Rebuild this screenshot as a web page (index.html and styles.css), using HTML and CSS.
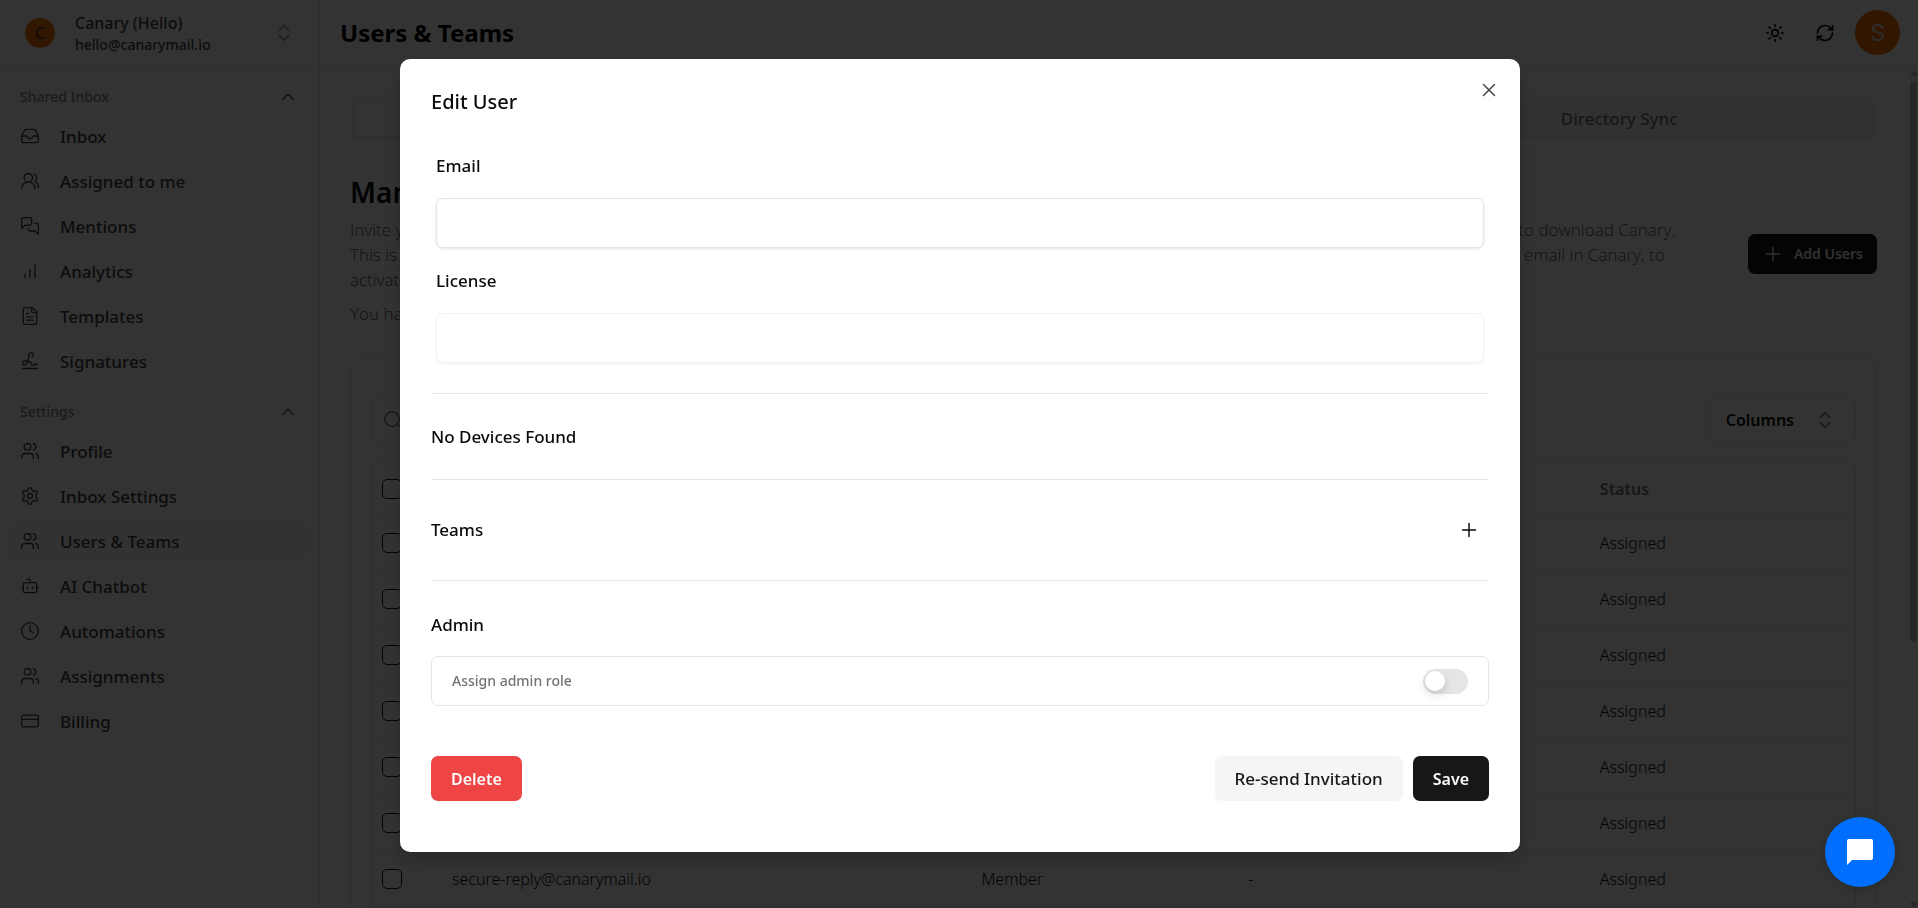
FILE: index.html
```html
<!DOCTYPE html>
<html lang="en">
<head>
    <meta charset="UTF-8">
    <meta name="viewport" content="width=device-width, initial-scale=1.0">
    <title>Users &amp; Teams</title>
    <link rel="stylesheet" href="styles.css">
</head>
<body>
    <!-- icon set -->
    <svg class="sprite" aria-hidden="true">
        <symbol id="i-inbox" viewBox="0 0 24 24"><path d="M22 12h-6l-2 3h-4l-2-3H2"/><path d="M5.45 5.11 2 12v6a2 2 0 0 0 2 2h16a2 2 0 0 0 2-2v-6l-3.45-6.89A2 2 0 0 0 16.76 4H7.24a2 2 0 0 0-1.79 1.11z"/></symbol>
        <symbol id="i-users-round" viewBox="0 0 24 24"><path d="M18 21a8 8 0 0 0-16 0"/><circle cx="10" cy="8" r="5"/><path d="M22 20c0-3.37-2-6.5-4-8a5 5 0 0 0-.45-8.3"/></symbol>
        <symbol id="i-messages" viewBox="0 0 24 24"><path d="M14 9a2 2 0 0 1-2 2H6l-4 4V4a2 2 0 0 1 2-2h8a2 2 0 0 1 2 2z"/><path d="M18 9h2a2 2 0 0 1 2 2v11l-4-4h-6a2 2 0 0 1-2-2v-1"/></symbol>
        <symbol id="i-bars" viewBox="0 0 24 24"><path d="M12 20V10M18 20V4M6 20v-4"/></symbol>
        <symbol id="i-file" viewBox="0 0 24 24"><path d="M15 2H6a2 2 0 0 0-2 2v16a2 2 0 0 0 2 2h12a2 2 0 0 0 2-2V7Z"/><path d="M14 2v4a2 2 0 0 0 2 2h4M10 9H8M16 13H8M16 17H8"/></symbol>
        <symbol id="i-signature" viewBox="0 0 24 24"><path d="m21 17-2.156-1.868A.5.5 0 0 0 18 15.5v.5a1 1 0 0 1-1 1h-2a1 1 0 0 1-1-1c0-2.545-3.991-3.97-8.5-4a1 1 0 0 0 0 5c4.153 0 4.745-11.295 5.708-13.5a2.5 2.5 0 1 1 3.31 3.284"/><path d="M3 21h18"/></symbol>
        <symbol id="i-users" viewBox="0 0 24 24"><path d="M16 21v-2a4 4 0 0 0-4-4H6a4 4 0 0 0-4 4v2"/><circle cx="9" cy="7" r="4"/><path d="M22 21v-2a4 4 0 0 0-3-3.87M16 3.13a4 4 0 0 1 0 7.75"/></symbol>
        <symbol id="i-gear" viewBox="0 0 24 24"><path d="M12.22 2h-.44a2 2 0 0 0-2 2v.18a2 2 0 0 1-1 1.73l-.43.25a2 2 0 0 1-2 0l-.15-.08a2 2 0 0 0-2.73.73l-.22.38a2 2 0 0 0 .73 2.73l.15.1a2 2 0 0 1 1 1.72v.51a2 2 0 0 1-1 1.74l-.15.09a2 2 0 0 0-.73 2.73l.22.38a2 2 0 0 0 2.73.73l.15-.08a2 2 0 0 1 2 0l.43.25a2 2 0 0 1 1 1.73V20a2 2 0 0 0 2 2h.44a2 2 0 0 0 2-2v-.18a2 2 0 0 1 1-1.73l.43-.25a2 2 0 0 1 2 0l.15.08a2 2 0 0 0 2.73-.73l.22-.39a2 2 0 0 0-.73-2.73l-.15-.08a2 2 0 0 1-1-1.74v-.5a2 2 0 0 1 1-1.74l.15-.09a2 2 0 0 0 .73-2.73l-.22-.38a2 2 0 0 0-2.73-.73l-.15.08a2 2 0 0 1-2 0l-.43-.25a2 2 0 0 1-1-1.73V4a2 2 0 0 0-2-2z"/><circle cx="12" cy="12" r="3"/></symbol>
        <symbol id="i-bot" viewBox="0 0 24 24"><path d="M12 8V4H8"/><rect width="16" height="12" x="4" y="8" rx="2"/><path d="M2 14h2M20 14h2M15 13v2M9 13v2"/></symbol>
        <symbol id="i-clock" viewBox="0 0 24 24"><circle cx="12" cy="12" r="10"/><path d="M12 6v6l4 2"/></symbol>
        <symbol id="i-card" viewBox="0 0 24 24"><rect width="20" height="14" x="2" y="5" rx="2"/><path d="M2 10h20"/></symbol>
        <symbol id="i-up" viewBox="0 0 24 24"><path d="m18 15-6-6-6 6"/></symbol>
        <symbol id="i-updown" viewBox="0 0 24 24"><path d="m7 15 5 5 5-5M7 9l5-5 5 5"/></symbol>
        <symbol id="i-sun" viewBox="0 0 24 24"><circle cx="12" cy="12" r="4"/><path d="M12 2v2M12 20v2M4.93 4.93l1.41 1.41M17.66 17.66l1.41 1.41M2 12h2M20 12h2M6.34 17.66l-1.41 1.41M19.07 4.93l-1.41 1.41"/></symbol>
        <symbol id="i-refresh" viewBox="0 0 24 24"><path d="M3 12a9 9 0 0 1 9-9 9.75 9.75 0 0 1 6.74 2.74L21 8"/><path d="M21 3v5h-5"/><path d="M21 12a9 9 0 0 1-9 9 9.75 9.75 0 0 1-6.74-2.74L3 16"/><path d="M8 16H3v5"/></symbol>
        <symbol id="i-search" viewBox="0 0 24 24"><circle cx="11" cy="11" r="8"/><path d="m21 21-4.3-4.3"/></symbol>
        <symbol id="i-plus" viewBox="0 0 24 24"><path d="M5 12h14M12 5v14"/></symbol>
        <symbol id="i-x" viewBox="0 0 24 24"><path d="M18 6 6 18M6 6l12 12"/></symbol>
    </svg>

    <div class="app">
        <aside class="sidebar">
            <button class="account" type="button">
                <span class="avatar avatar-sm">C</span>
                <span class="account-text">
                    <span class="account-name">Canary (Hello)</span>
                    <span class="account-mail">hello@canarymail.io</span>
                </span>
                <svg class="icon muted"><use href="#i-updown"/></svg>
            </button>
            <nav class="nav">
                <button class="nav-title" type="button">Shared Inbox <svg class="icon"><use href="#i-up"/></svg></button>
                <a class="nav-item" href="#"><svg class="icon"><use href="#i-inbox"/></svg>Inbox</a>
                <a class="nav-item" href="#"><svg class="icon"><use href="#i-users-round"/></svg>Assigned to me</a>
                <a class="nav-item" href="#"><svg class="icon"><use href="#i-messages"/></svg>Mentions</a>
                <a class="nav-item" href="#"><svg class="icon"><use href="#i-bars"/></svg>Analytics</a>
                <a class="nav-item" href="#"><svg class="icon"><use href="#i-file"/></svg>Templates</a>
                <a class="nav-item" href="#"><svg class="icon"><use href="#i-signature"/></svg>Signatures</a>
            </nav>
            <nav class="nav">
                <button class="nav-title" type="button">Settings <svg class="icon"><use href="#i-up"/></svg></button>
                <a class="nav-item" href="#"><svg class="icon"><use href="#i-users"/></svg>Profile</a>
                <a class="nav-item" href="#"><svg class="icon"><use href="#i-gear"/></svg>Inbox Settings</a>
                <a class="nav-item active" href="#"><svg class="icon"><use href="#i-users"/></svg>Users &amp; Teams</a>
                <a class="nav-item" href="#"><svg class="icon"><use href="#i-bot"/></svg>AI Chatbot</a>
                <a class="nav-item" href="#"><svg class="icon"><use href="#i-clock"/></svg>Automations</a>
                <a class="nav-item" href="#"><svg class="icon"><use href="#i-users"/></svg>Assignments</a>
                <a class="nav-item" href="#"><svg class="icon"><use href="#i-card"/></svg>Billing</a>
            </nav>
        </aside>

        <div class="main">
            <header class="topbar">
                <h1>Users &amp; Teams</h1>
                <button class="icon-btn" type="button" aria-label="Theme"><svg class="icon"><use href="#i-sun"/></svg></button>
                <button class="icon-btn" type="button" aria-label="Refresh"><svg class="icon"><use href="#i-refresh"/></svg></button>
                <button class="avatar avatar-lg" type="button">S</button>
            </header>

            <div class="content">
                <div class="tabs">
                    <button class="tab selected" type="button">Users</button>
                    <button class="tab" type="button">Teams</button>
                    <button class="tab" type="button">Directory Sync</button>
                </div>

                <div class="intro">
                    <div class="intro-text">
                        <h2>Manage Users</h2>
                        <p>Invite your team members to use Canary with the licenses that are included in your plan. They'll receive an email invitation with the instructions and a link to download Canary.<br>
                        This is the easiest way to get everyone in your organization on board. Once the mobile app is installed, each of the users needs to sign in with their invited email in Canary, to<br>
                        activate it.</p>
                        <p>You have licenses available.</p>
                    </div>
                    <button class="btn-add" type="button"><svg class="icon"><use href="#i-plus"/></svg>Add Users</button>
                </div>

                <div class="card">
                    <div class="toolbar">
                        <label class="search">
                            <svg class="icon"><use href="#i-search"/></svg>
                            <input type="text" aria-label="Search">
                        </label>
                        <button class="btn-columns" type="button">Columns <svg class="icon muted"><use href="#i-updown"/></svg></button>
                    </div>
                    <div class="table-wrap">
                        <table class="users">
                            <colgroup><col class="c-check"><col class="c-email"><col class="c-role"><col class="c-team"><col class="c-status"></colgroup>
                            <thead>
                                <tr><th><input type="checkbox" aria-label="Select all"></th><th>Email</th><th>Role</th><th>Teams</th><th>Status</th></tr>
                            </thead>
                            <tbody>
                                <tr><td><input type="checkbox" aria-label="Select"></td><td></td><td></td><td></td><td>Assigned</td></tr>
                                <tr><td><input type="checkbox" aria-label="Select"></td><td></td><td></td><td></td><td>Assigned</td></tr>
                                <tr><td><input type="checkbox" aria-label="Select"></td><td></td><td></td><td></td><td>Assigned</td></tr>
                                <tr><td><input type="checkbox" aria-label="Select"></td><td></td><td></td><td></td><td>Assigned</td></tr>
                                <tr><td><input type="checkbox" aria-label="Select"></td><td></td><td></td><td></td><td>Assigned</td></tr>
                                <tr><td><input type="checkbox" aria-label="Select"></td><td></td><td></td><td></td><td>Assigned</td></tr>
                                <tr><td><input type="checkbox" aria-label="Select"></td><td>secure-reply@canarymail.io</td><td>Member</td><td>-</td><td>Assigned</td></tr>
                                <tr><td></td><td></td><td></td><td></td><td></td></tr>
                            </tbody>
                        </table>
                    </div>
                </div>
                <div class="scrollbar"><span class="arrow-up"></span><span class="thumb"></span><span class="arrow-down"></span></div>
            </div>
        </div>
    </div>

    <div class="overlay">
        <div class="modal" role="dialog" aria-labelledby="modalTitle">
            <button class="close" type="button" aria-label="Close"><svg class="icon"><use href="#i-x"/></svg></button>
            <h2 id="modalTitle">Edit User</h2>
            <div class="fields">
                <label for="email">Email</label>
                <input type="text" id="email">
                <label for="license">License</label>
                <input type="text" id="license" disabled>
            </div>
            <div class="section">No Devices Found</div>
            <div class="section section-teams">Teams
                <button class="icon-btn" type="button" aria-label="Add team"><svg class="icon"><use href="#i-plus"/></svg></button>
            </div>
            <div class="section section-admin">Admin</div>
            <div class="admin-row">
                <label for="admin">Assign admin role</label>
                <input class="switch" type="checkbox" id="admin">
            </div>
            <div class="actions">
                <button class="btn btn-delete" type="button">Delete</button>
                <button class="btn btn-resend" type="button">Re-send Invitation</button>
                <button class="btn btn-save" type="button">Save</button>
            </div>
        </div>
    </div>

    <button class="chat" type="button" aria-label="Chat">
        <svg viewBox="0 0 26 26"><path d="M2 0h22a2 2 0 0 1 2 2v17a2 2 0 0 1-2 2H5l-5 5V2a2 2 0 0 1 2-2z"/></svg>
    </button>
</body>
</html>
```

FILE: styles.css
```css
* {
    box-sizing: border-box;
}
body {
    margin: 0;
    font-family: "Noto Sans", "Open Sans", sans-serif;
    font-size: 16px;
    line-height: 24px;
    color: #0a0a0a;
    background: #fff;
    overflow: hidden;
}
button, input {
    font: inherit;
    color: inherit;
}
button {
    margin: 0;
    padding: 0;
    border: none;
    background: none;
    cursor: pointer;
}
h1, h2, p {
    margin: 0;
}
.sprite {
    display: none;
}
.icon {
    width: 22px;
    height: 22px;
    flex: none;
    fill: none;
    stroke: currentColor;
    stroke-width: 1.6;
    stroke-linecap: round;
    stroke-linejoin: round;
}
.muted {
    opacity: 0.6;
}

/* layout */
.app {
    display: flex;
    height: 100vh;
    overflow: hidden;
}
.sidebar {
    width: 320px;
    flex: none;
    border-right: 1px solid #e5e5e5;
    color: #404040;
}
.main {
    flex: 1;
    min-width: 0;
    display: flex;
    flex-direction: column;
}

/* sidebar */
.account {
    width: 100%;
    height: 66px;
    padding: 0 24px 0 25px;
    display: flex;
    align-items: center;
    border-bottom: 1px solid #e5e5e5;
    text-align: left;
}
.avatar {
    display: flex;
    align-items: center;
    justify-content: center;
    flex: none;
    border-radius: 50%;
    background: #f97300;
}
.avatar-sm {
    width: 30px;
    height: 30px;
    color: #333;
}
.avatar-lg {
    width: 45px;
    height: 45px;
    margin-left: 5px;
    color: #ddd;
    font-family: Roboto, sans-serif;
    font-size: 24px;
}
.account-text {
    flex: 1;
    margin-left: 20px;
    padding-top: 3px;
    display: flex;
    flex-direction: column;
    line-height: 22px;
    font-weight: 500;
}
.account-mail {
    font-size: 14px;
}
.nav {
    padding: 10px 10px 0;
}
.nav + .nav {
    padding-top: 3px;
}
.nav-title {
    width: 100%;
    height: 42px;
    padding: 0 10px;
    display: flex;
    align-items: center;
    justify-content: space-between;
    font-size: 14px;
    font-weight: 500;
    color: #888;
}
.nav-title .icon {
    color: #555;
}
.nav-item {
    height: 38px;
    margin-bottom: 7px;
    padding: 0 10px;
    display: flex;
    align-items: center;
    gap: 20px;
    border-radius: 8px;
    color: inherit;
    font-size: 17px;
    font-weight: 500;
    text-decoration: none;
}
.nav-item .icon {
    width: 20px;
    height: 20px;
    margin-bottom: 2px;
}
.nav-item.active {
    background: #f8f8f8;
}

/* top bar */
.topbar {
    height: 66px;
    flex: none;
    padding: 0 18px 0 20px;
    display: flex;
    align-items: center;
    border-bottom: 1px solid #e5e5e5;
    color: #000;
}
.topbar h1 {
    flex: 1;
    font-size: 24px;
    font-weight: 700;
}
.icon-btn {
    width: 40px;
    height: 40px;
    display: flex;
    align-items: center;
    justify-content: center;
}
.topbar .icon-btn {
    width: 50px;
}
.topbar .icon {
    width: 20px;
    height: 20px;
    stroke-width: 2;
}

/* content */
.content {
    position: relative;
    flex: 1;
    min-height: 0;
    padding: 31px 41px 0 30px;
    overflow: hidden;
}
.tabs {
    height: 44px;
    padding: 5px;
    display: flex;
    border-radius: 10px;
    background: #f5f5f5;
}
.tab {
    flex: 1;
    border-radius: 7px;
    font-size: 17px;
    font-weight: 500;
    color: #737373;
}
.tab.selected {
    background: #fff;
    color: #0a0a0a;
    box-shadow: 0 1px 3px rgba(0,0,0,0.15);
}
.intro {
    display: flex;
    align-items: center;
    justify-content: space-between;
    margin-top: 31px;
}
.intro h2 {
    margin-bottom: 4px;
    font-size: 28px;
    font-weight: 600;
    line-height: 41px;
}
.intro p {
    margin-bottom: 9px;
    font-family: "Open Sans", "Noto Sans", sans-serif;
    font-size: 17px;
    line-height: 25px;
    font-weight: 300;
    color: #555;
    white-space: nowrap;
}
.btn-add {
    height: 40px;
    padding: 0 14px;
    display: flex;
    align-items: center;
    gap: 10px;
    border-radius: 7px;
    background: #171717;
    color: #eee;
    font-size: 14px;
    font-weight: 600;
}
.card {
    margin-top: 21px;
    padding: 40px 20px 0;
    border: 1px solid #e5e5e5;
    border-radius: 14px;
}
.toolbar {
    display: flex;
    justify-content: space-between;
}
.search {
    width: 400px;
    height: 45px;
    padding: 0 10px;
    display: flex;
    align-items: center;
    border: 1px solid #e5e5e5;
    border-radius: 7px;
    color: #777;
}
.search input {
    flex: 1;
    border: none;
    outline: none;
    background: none;
}
.btn-columns {
    height: 45px;
    padding: 0 19px;
    display: flex;
    align-items: center;
    gap: 20px;
    border: 1px solid #e5e5e5;
    border-radius: 7px;
    font-weight: 600;
}
.table-wrap {
    margin-top: 20px;
    border: 1px solid #e5e5e5;
    border-radius: 7px;
}
.users {
    width: 100%;
    table-layout: fixed;
    border-collapse: collapse;
}
.c-check {
    width: 70px;
}
.c-email {
    width: 35.7%;
}
.c-role {
    width: 18%;
}
.c-team {
    width: 23.7%;
}
.users th, .users td {
    padding: 1px 10px 0;
    text-align: left;
    border-bottom: 1px solid #e5e5e5;
}
.users th {
    height: 51px;
    font-weight: 600;
    color: #737373;
}
.users td {
    height: 56px;
    font-weight: 300;
}
.users input {
    display: block;
    appearance: none;
    width: 20px;
    height: 20px;
    margin: 0;
    border: 1px solid #171717;
    border-radius: 5px;
}
.scrollbar {
    position: absolute;
    top: 4px;
    right: 1px;
    bottom: 0;
    width: 7px;
}
.scrollbar span {
    display: block;
}
.arrow-up {
    border: 4px solid transparent;
    border-top: none;
    border-bottom: 6px solid #c0c0c0;
}
.thumb {
    height: 67%;
    margin-top: 5px;
    border-radius: 4px;
    background: #c0c0c0;
}
.arrow-down {
    position: absolute;
    bottom: 0;
    border: 4px solid transparent;
    border-bottom: none;
    border-top: 6px solid #c0c0c0;
}

/* dialog */
.overlay {
    position: fixed;
    inset: 0;
    padding: 3px 0 0 2px;
    display: flex;
    align-items: center;
    justify-content: center;
    background: rgba(0,0,0,0.8);
}
.modal {
    position: relative;
    width: 1120px;
    max-width: 100%;
    padding: 29px 31px 51px;
    border-radius: 10px;
    background: #fff;
    box-shadow: 0 10px 20px rgba(0,0,0,0.2);
    font-size: 17px;
    font-weight: 500;
}
.modal h2 {
    font-size: 20px;
    line-height: 27px;
    font-weight: 500;
}
.close {
    position: absolute;
    top: 20px;
    right: 20px;
    width: 22px;
    height: 22px;
    color: #444;
}
.fields {
    padding: 38px 5px 30px;
    display: flex;
    flex-direction: column;
    line-height: 25px;
}
.fields input {
    height: 50px;
    margin: 20px 0;
    padding: 0 15px;
    border: 1px solid #e5e5e5;
    border-radius: 7px;
    background: #fff;
    box-shadow: 0 1px 3px rgba(0,0,0,0.1);
}
.fields input:disabled {
    margin-bottom: 0;
    opacity: 0.5;
}
.section {
    height: 86px;
    display: flex;
    align-items: center;
    justify-content: space-between;
    border-top: 1px solid #e5e5e5;
}
.section-teams {
    height: 101px;
}
.admin-row {
    height: 50px;
    padding: 0 20px;
    display: flex;
    align-items: center;
    justify-content: space-between;
    border: 1px solid #e5e5e5;
    border-radius: 7px;
    color: #737373;
    font-size: 14px;
}
.section-admin {
    height: 76px;
    padding-top: 12px;
}
.switch {
    appearance: none;
    width: 45px;
    height: 25px;
    margin: 0;
    padding: 2px;
    border-radius: 13px;
    background: #e5e5e5;
    cursor: pointer;
}
.switch::before {
    content: "";
    display: block;
    width: 20px;
    height: 20px;
    border-radius: 50%;
    background: #fff;
    box-shadow: 0 4px 8px rgba(0,0,0,0.15);
}
.switch:checked {
    background: #171717;
}
.actions {
    margin-top: 50px;
    display: flex;
    gap: 10px;
}
.btn {
    height: 45px;
    padding: 0 20px;
    border-radius: 7px;
    font-size: 16px;
    font-weight: 600;
}
.btn-delete {
    margin-right: auto;
    background: #ef4444;
    color: #fafafa;
}
.btn-resend {
    background: #f5f5f5;
    color: #171717;
    font-size: 17px;
    font-weight: 500;
}
.btn-save {
    background: #171717;
    color: #fafafa;
}
.chat {
    position: fixed;
    right: 23px;
    bottom: 21px;
    width: 70px;
    height: 70px;
    display: flex;
    align-items: center;
    justify-content: center;
    border-radius: 50%;
    background: #006eff;
    box-shadow: 0 2px 8px rgba(0,0,0,0.2);
}
.chat svg {
    width: 26px;
    height: 26px;
    fill: #fff;
}
```
